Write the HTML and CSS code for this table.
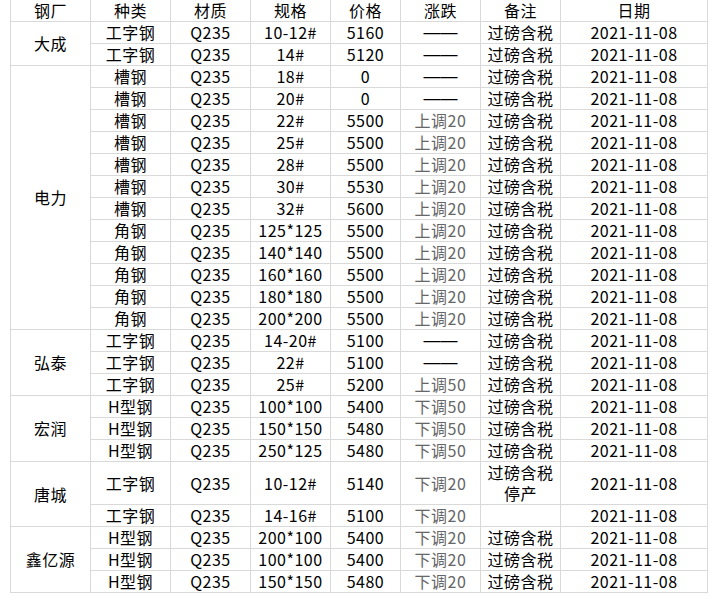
FILE: index.html
```html
<!DOCTYPE html>
<html lang="zh-CN">
<head>
<meta charset="utf-8">
<title>钢材价格</title>
<link rel="stylesheet" href="styles.css">
</head>
<body>
<table class="price">
<colgroup>
<col class="c1"><col class="c2"><col class="c3"><col class="c4"><col class="c5"><col class="c6"><col class="c7"><col class="c8">
</colgroup>
<thead>
<tr><th>钢厂</th><th>种类</th><th>材质</th><th>规格</th><th>价格</th><th>涨跌</th><th>备注</th><th>日期</th></tr>
</thead>
<tbody>
<tr><td rowspan="2">大成</td><td>工字钢</td><td>Q235</td><td>10-12#</td><td>5160</td><td class="dash">——</td><td>过磅含税</td><td>2021-11-08</td></tr>
<tr><td>工字钢</td><td>Q235</td><td>14#</td><td>5120</td><td class="dash">——</td><td>过磅含税</td><td>2021-11-08</td></tr>
<tr><td rowspan="12">电力</td><td>槽钢</td><td>Q235</td><td>18#</td><td>0</td><td class="dash">——</td><td>过磅含税</td><td>2021-11-08</td></tr>
<tr><td>槽钢</td><td>Q235</td><td>20#</td><td>0</td><td class="dash">——</td><td>过磅含税</td><td>2021-11-08</td></tr>
<tr><td>槽钢</td><td>Q235</td><td>22#</td><td>5500</td><td class="chg">上调20</td><td>过磅含税</td><td>2021-11-08</td></tr>
<tr><td>槽钢</td><td>Q235</td><td>25#</td><td>5500</td><td class="chg">上调20</td><td>过磅含税</td><td>2021-11-08</td></tr>
<tr><td>槽钢</td><td>Q235</td><td>28#</td><td>5500</td><td class="chg">上调20</td><td>过磅含税</td><td>2021-11-08</td></tr>
<tr><td>槽钢</td><td>Q235</td><td>30#</td><td>5530</td><td class="chg">上调20</td><td>过磅含税</td><td>2021-11-08</td></tr>
<tr><td>槽钢</td><td>Q235</td><td>32#</td><td>5600</td><td class="chg">上调20</td><td>过磅含税</td><td>2021-11-08</td></tr>
<tr><td>角钢</td><td>Q235</td><td>125*125</td><td>5500</td><td class="chg">上调20</td><td>过磅含税</td><td>2021-11-08</td></tr>
<tr><td>角钢</td><td>Q235</td><td>140*140</td><td>5500</td><td class="chg">上调20</td><td>过磅含税</td><td>2021-11-08</td></tr>
<tr><td>角钢</td><td>Q235</td><td>160*160</td><td>5500</td><td class="chg">上调20</td><td>过磅含税</td><td>2021-11-08</td></tr>
<tr><td>角钢</td><td>Q235</td><td>180*180</td><td>5500</td><td class="chg">上调20</td><td>过磅含税</td><td>2021-11-08</td></tr>
<tr><td>角钢</td><td>Q235</td><td>200*200</td><td>5500</td><td class="chg">上调20</td><td>过磅含税</td><td>2021-11-08</td></tr>
<tr><td rowspan="3">弘泰</td><td>工字钢</td><td>Q235</td><td>14-20#</td><td>5100</td><td class="dash">——</td><td>过磅含税</td><td>2021-11-08</td></tr>
<tr><td>工字钢</td><td>Q235</td><td>22#</td><td>5100</td><td class="dash">——</td><td>过磅含税</td><td>2021-11-08</td></tr>
<tr><td>工字钢</td><td>Q235</td><td>25#</td><td>5200</td><td class="chg">上调50</td><td>过磅含税</td><td>2021-11-08</td></tr>
<tr><td rowspan="3">宏润</td><td>H型钢</td><td>Q235</td><td>100*100</td><td>5400</td><td class="chg">下调50</td><td>过磅含税</td><td>2021-11-08</td></tr>
<tr><td>H型钢</td><td>Q235</td><td>150*150</td><td>5480</td><td class="chg">下调50</td><td>过磅含税</td><td>2021-11-08</td></tr>
<tr><td>H型钢</td><td>Q235</td><td>250*125</td><td>5480</td><td class="chg">下调50</td><td>过磅含税</td><td>2021-11-08</td></tr>
<tr class="tall"><td rowspan="2">唐城</td><td>工字钢</td><td>Q235</td><td>10-12#</td><td>5140</td><td class="chg">下调20</td><td>过磅含税<br>停产</td><td>2021-11-08</td></tr>
<tr><td>工字钢</td><td>Q235</td><td>14-16#</td><td>5100</td><td class="chg">下调20</td><td></td><td>2021-11-08</td></tr>
<tr><td rowspan="3">鑫亿源</td><td>H型钢</td><td>Q235</td><td>200*100</td><td>5400</td><td class="chg">下调20</td><td>过磅含税</td><td>2021-11-08</td></tr>
<tr><td>H型钢</td><td>Q235</td><td>100*100</td><td>5400</td><td class="chg">下调20</td><td>过磅含税</td><td>2021-11-08</td></tr>
<tr><td>H型钢</td><td>Q235</td><td>150*150</td><td>5480</td><td class="chg">下调20</td><td>过磅含税</td><td>2021-11-08</td></tr>
</tbody>
</table>
</body>
</html>
```
FILE: styles.css
```css
html, body {
  margin: 0;
  padding: 0;
  background: #fff;
}
body {
  font-family: "Noto Sans CJK SC", "Noto Sans", sans-serif;
  font-size: 16px;
  color: #000;
}
.price {
  border-collapse: collapse;
  table-layout: fixed;
  margin-left: 10px;
  width: 698px;
}
.c1, .c2, .c3, .c4, .c6, .c7 { width: 80px; }
.c5 { width: 70px; }
.c8 { width: 147px; }
.price th, .price td {
  border: 1px solid #d9d9d9;
  padding: 0;
  height: 21px;
  line-height: 21px;
  text-align: center;
  vertical-align: middle;
  font-weight: normal;
  white-space: nowrap;
  overflow: hidden;
  letter-spacing: 0.5px;
}
.price thead th { border-top: none; }
.price .tall td { height: 42px; }
.price .chg { color: #666; }
.price .dash {
  font-family: "Liberation Sans", sans-serif;
  font-size: 17px;
  letter-spacing: 0;
}
```
